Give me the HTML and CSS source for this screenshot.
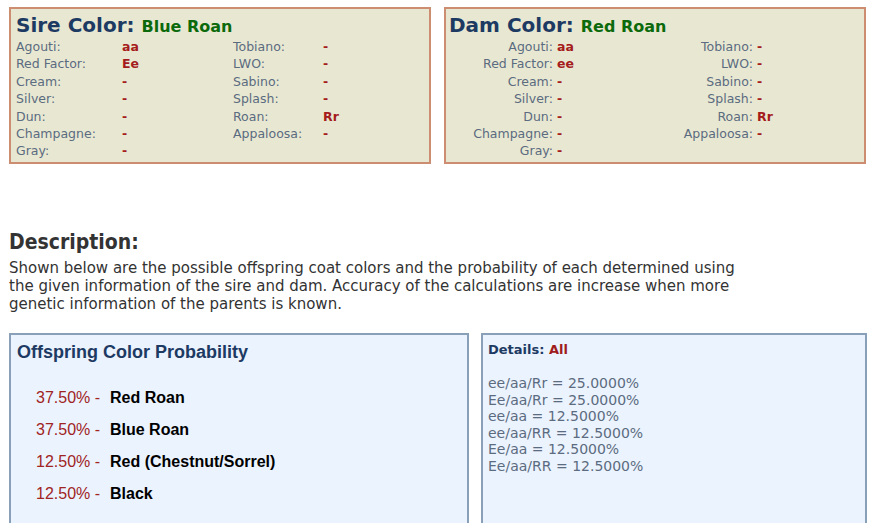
FILE: index.html
```html
<!DOCTYPE html>
<html>
<head>
<meta charset="utf-8">
<link rel="stylesheet" href="styles.css">
</head>
<body>
<div class="page">
<div class="parents">
  <div class="parent sire">
    <h2 class="ptitle">Sire Color: <span class="cname">Blue Roan</span></h2>
    <div class="genes">
      <span class="lbl">Agouti:</span><span class="val">aa</span><span class="lbl">Tobiano:</span><span class="val">-</span>
      <span class="lbl">Red Factor:</span><span class="val">Ee</span><span class="lbl">LWO:</span><span class="val">-</span>
      <span class="lbl">Cream:</span><span class="val">-</span><span class="lbl">Sabino:</span><span class="val">-</span>
      <span class="lbl">Silver:</span><span class="val">-</span><span class="lbl">Splash:</span><span class="val">-</span>
      <span class="lbl">Dun:</span><span class="val">-</span><span class="lbl">Roan:</span><span class="val">Rr</span>
      <span class="lbl">Champagne:</span><span class="val">-</span><span class="lbl">Appaloosa:</span><span class="val">-</span>
      <span class="lbl">Gray:</span><span class="val">-</span><span></span><span></span>
    </div>
  </div>
  <div class="parent dam">
    <h2 class="ptitle">Dam Color: <span class="cname">Red Roan</span></h2>
    <div class="genes">
      <span class="lbl">Agouti:</span><span class="val">aa</span><span class="lbl">Tobiano:</span><span class="val">-</span>
      <span class="lbl">Red Factor:</span><span class="val">ee</span><span class="lbl">LWO:</span><span class="val">-</span>
      <span class="lbl">Cream:</span><span class="val">-</span><span class="lbl">Sabino:</span><span class="val">-</span>
      <span class="lbl">Silver:</span><span class="val">-</span><span class="lbl">Splash:</span><span class="val">-</span>
      <span class="lbl">Dun:</span><span class="val">-</span><span class="lbl">Roan:</span><span class="val">Rr</span>
      <span class="lbl">Champagne:</span><span class="val">-</span><span class="lbl">Appaloosa:</span><span class="val">-</span>
      <span class="lbl">Gray:</span><span class="val">-</span><span></span><span></span>
    </div>
  </div>
</div>

<div class="desc">
  <h2 class="dtitle">Description:</h2>
  <p class="dtext">Shown below are the possible offspring coat colors and the probability of each determined using<br>the given information of the sire and dam. Accuracy of the calculations are increase when more<br>genetic information of the parents is known.</p>
</div>

<div class="results">
  <div class="rbox prob">
    <h3 class="rtitle">Offspring Color Probability</h3>
    <ul class="plist">
      <li><span class="pct">37.50% -</span><span class="pname">Red Roan</span></li>
      <li><span class="pct">37.50% -</span><span class="pname">Blue Roan</span></li>
      <li><span class="pct">12.50% -</span><span class="pname">Red (Chestnut/Sorrel)</span></li>
      <li><span class="pct">12.50% -</span><span class="pname">Black</span></li>
    </ul>
  </div>
  <div class="rbox details">
    <div class="dhead">Details: <span class="all">All</span></div>
    <div class="dlines">
      <div>ee/aa/Rr = 25.0000%</div>
      <div>Ee/aa/Rr = 25.0000%</div>
      <div>ee/aa = 12.5000%</div>
      <div>ee/aa/RR = 12.5000%</div>
      <div>Ee/aa = 12.5000%</div>
      <div>Ee/aa/RR = 12.5000%</div>
    </div>
  </div>
</div>
</div>
</body>
</html>
```

FILE: styles.css
```css
* { box-sizing: border-box; }
html, body {
  margin: 0;
  background: #ffffff;
  font-family: "DejaVu Sans", Verdana, sans-serif;
}
.page {
  height: 523px;
  overflow: hidden;
}
.parents {
  display: flex;
  gap: 13px;
  padding: 7px 0 0 9px;
}
.parent {
  width: 422px;
  height: 157px;
  background: #e8e8d2;
  border: 2px solid #cd8d70;
  padding: 3px 5px 0 5px;
}
.ptitle {
  margin: 0;
  font-size: 20px;
  font-weight: bold;
  color: #1d3a63;
  line-height: 26px;
  white-space: nowrap;
}
.dam .ptitle { margin-left: -2px; }
.cname {
  color: #0c6a0c;
  font-size: 16px;
}
.genes {
  display: grid;
  grid-template-columns: 106px 111px 90px 1fr;
  font-size: 12.5px;
  line-height: 17.4px;
  margin-top: -2px;
}
.lbl { color: #5b6b80; }
.val { color: #a51c1c; font-weight: bold; }
.dam .lbl { text-align: right; padding-right: 4px; }
.dam .genes { grid-template-columns: 106px 4px 196px 1fr; }

.desc {
  padding: 65px 0 0 9px;
}
.dtitle {
  margin: 0 0 4px 0;
  font-family: "DejaVu Sans Condensed", "DejaVu Sans", sans-serif;
  font-size: 21px;
  font-weight: bold;
  color: #333333;
  line-height: 26px;
}
.dtext {
  margin: 0;
  font-size: 15px;
  line-height: 18px;
  color: #333333;
}
.results {
  display: flex;
  gap: 12px;
  padding: 20px 0 0 9px;
}
.rbox {
  background: #ebf3fe;
  border: 2px solid #8aa0b8;
  height: 220px;
}
.prob {
  width: 460px;
  padding: 7px 6px;
  font-family: "Liberation Sans", Arial, sans-serif;
}
.rtitle {
  margin: 0;
  font-size: 18px;
  font-weight: bold;
  color: #1d3a63;
  line-height: 20px;
}
.plist {
  list-style: none;
  margin: 20px 0 0 0;
  padding: 0 0 0 19px;
}
.plist li {
  font-size: 16px;
  line-height: 32px;
  height: 32px;
}
.pct { color: #a02424; display: inline-block; width: 74px; }
.pname { font-weight: bold; color: #000; }
.details {
  width: 386px;
  padding: 6px 5px;
  font-size: 13px;
}
.dhead {
  font-weight: bold;
  color: #1d3a63;
  line-height: 18px;
}
.all { color: #a01c1c; }
.dlines {
  margin-top: 16px;
  color: #5b6b80;
  font-size: 14px;
  line-height: 16.6px;
}
```
